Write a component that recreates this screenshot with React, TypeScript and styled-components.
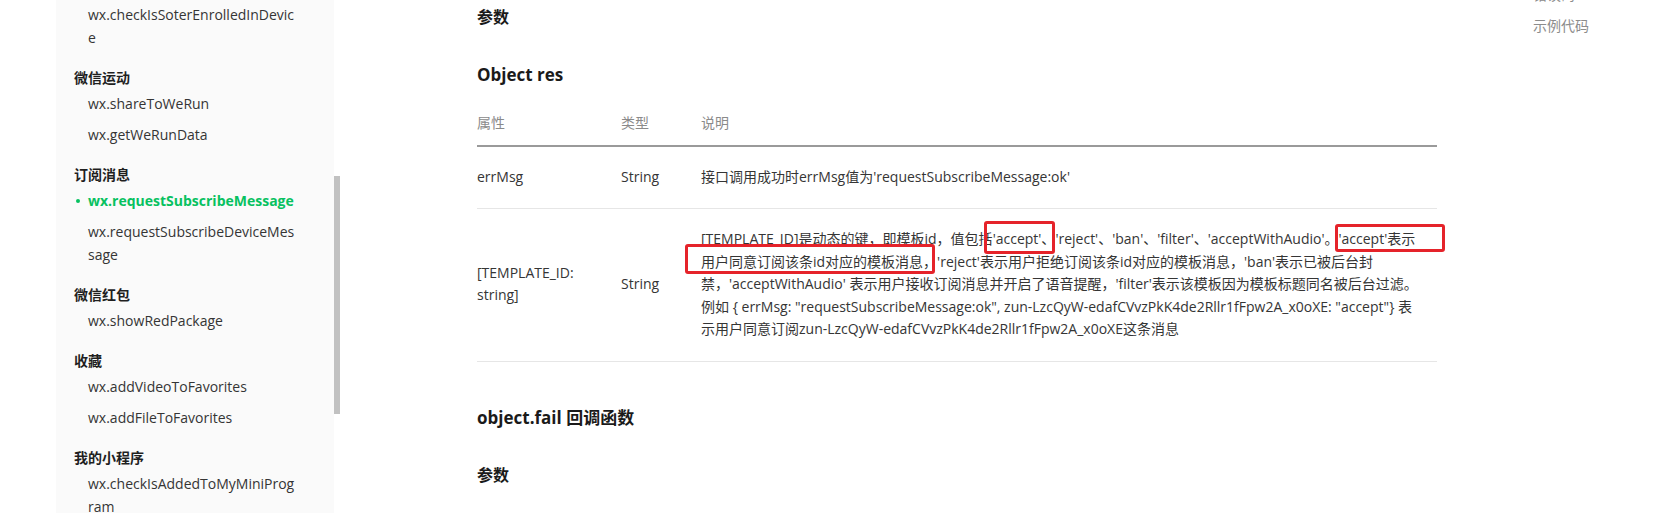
import React from "react";
import styled, { createGlobalStyle } from "styled-components";

type NavGroup = {
  title?: string;
  items: { label: string; active?: boolean }[];
};

type MarkProps = {
  $t: number;
  $r: number;
  $b: number;
  $l: number;
};

// \u200B marks where the long api names wrap in the original sidebar
const navGroups: NavGroup[] = [
  { items: [{ label: "wx.checkIsSoterEnrolledInDevic\u200Be" }] },
  {
    title: "微信运动",
    items: [{ label: "wx.shareToWeRun" }, { label: "wx.getWeRunData" }],
  },
  {
    title: "订阅消息",
    items: [
      { label: "wx.requestSubscribeMessage", active: true },
      { label: "wx.requestSubscribeDeviceMes\u200Bsage" },
    ],
  },
  { title: "微信红包", items: [{ label: "wx.showRedPackage" }] },
  {
    title: "收藏",
    items: [{ label: "wx.addVideoToFavorites" }, { label: "wx.addFileToFavorites" }],
  },
  { title: "我的小程序", items: [{ label: "wx.checkIsAddedToMyMiniProg\u200Bram" }] },
];

const GlobalStyle = createGlobalStyle`
  html, body {
    margin: 0;
    padding: 0;
    background: #ffffff;
    overflow: hidden;
  }
  body {
    font-family: "Open Sans", "Noto Sans CJK SC", sans-serif;
    font-size: 14px;
    color: #353535;
  }
`;

const Page = styled.div`
  display: flex;
  align-items: flex-start;
  height: 513px;
  overflow: hidden;
`;

const SideArea = styled.aside`
  display: flex;
  flex: none;
  margin-left: 56px;
  height: 513px;
`;

const SideNav = styled.nav`
  width: 278px;
  box-sizing: border-box;
  padding-left: 18px;
  background: #fafafa;
`;

const NavInner = styled.div`
  margin-top: -1px;
`;

const Group = styled.div<{ $first?: boolean }>`
  margin-top: ${(p) => (p.$first ? 0 : 14)}px;
`;

const GroupTitle = styled.div`
  font-weight: 700;
  line-height: 21px;
  color: #1f1f1f;
`;

const NavItem = styled.div<{ $active?: boolean }>`
  position: relative;
  width: 212px;
  padding: 4px 0 4px 14px;
  line-height: 23px;
  word-break: normal;
  color: ${(p) => (p.$active ? "#07c160" : "#353535")};
  font-weight: ${(p) => (p.$active ? 700 : 400)};

  &::before {
    content: "";
    display: ${(p) => (p.$active ? "block" : "none")};
    position: absolute;
    left: 2px;
    top: 14px;
    width: 4px;
    height: 4px;
    border-radius: 50%;
    background: #07c160;
  }
`;

const ScrollTrack = styled.div`
  width: 6px;
  background: #ffffff;
`;

const ScrollThumb = styled.div`
  margin-top: 176px;
  height: 238px;
  background: #c1c1c1;
`;

const Main = styled.main`
  flex: none;
  width: 960px;
  margin-left: 137px;
  padding-top: 5px;
`;

const SubTitle = styled.h4<{ $gap?: number }>`
  margin: ${(p) => p.$gap || 0}px 0 0;
  font-size: 16px;
  line-height: 24px;
  font-weight: 700;
  color: #1a1a1a;
`;

const Title = styled.h3<{ $gap: number }>`
  margin: ${(p) => p.$gap}px 0 0;
  font-size: 17px;
  line-height: 26px;
  font-weight: 700;
  color: #1a1a1a;
`;

const Table = styled.table`
  width: 100%;
  margin-top: 13px;
  border-collapse: collapse;
  table-layout: fixed;
`;

const HeadCell = styled.th<{ $w?: number }>`
  width: ${(p) => (p.$w ? `${p.$w}px` : "auto")};
  padding: 11px 0 10px;
  text-align: left;
  font-weight: 400;
  line-height: 22.5px;
  color: #8a8a8a;
  border-bottom: 2px solid #9a9a9a;
`;

const Cell = styled.td`
  padding: 19px 10px 20px 0;
  line-height: 22.5px;
  vertical-align: middle;
  border-bottom: 1px solid #e6e6e6;
  color: #353535;
`;

const DescLine = styled.span`
  display: block;
  white-space: nowrap;
`;

const Marked = styled.span<MarkProps>`
  position: relative;

  &::after {
    content: "";
    position: absolute;
    top: ${(p) => p.$t}px;
    right: ${(p) => p.$r}px;
    bottom: ${(p) => p.$b}px;
    left: ${(p) => p.$l}px;
    border: 3px solid #e5232a;
    border-radius: 3px;
    pointer-events: none;
  }
`;

const Outline = styled.div`
  flex: none;
  margin-left: 96px;
  margin-top: -21px;
`;

const OutlineItem = styled.div`
  line-height: 31px;
  color: #8c8c8c;
`;

const NavList: React.FC = () => (
  <SideArea>
    <SideNav>
      <NavInner>
        {navGroups.map((group, i) => (
          <Group key={i} $first={i === 0}>
            {group.title && <GroupTitle>{group.title}</GroupTitle>}
            {group.items.map((item) => (
              <NavItem key={item.label} $active={item.active}>
                {item.label}
              </NavItem>
            ))}
          </Group>
        ))}
      </NavInner>
    </SideNav>
    <ScrollTrack>
      <ScrollThumb />
    </ScrollTrack>
  </SideArea>
);

export default function App() {
  return (
    <>
      <GlobalStyle />
      <Page>
        <NavList />
        <Main>
          <SubTitle>参数</SubTitle>
          <Title $gap={33}>Object res</Title>
          <Table>
            <thead>
              <tr>
                <HeadCell $w={144}>属性</HeadCell>
                <HeadCell $w={80}>类型</HeadCell>
                <HeadCell>说明</HeadCell>
              </tr>
            </thead>
            <tbody>
              <tr>
                <Cell>errMsg</Cell>
                <Cell>String</Cell>
                <Cell>接口调用成功时errMsg值为'requestSubscribeMessage:ok'</Cell>
              </tr>
              <tr>
                <Cell>[TEMPLATE_ID: string]</Cell>
                <Cell>String</Cell>
                <Cell>
                  <DescLine>
                    [TEMPLATE_ID]是动态的键，即模板id，值包括
                    <Marked $t={-8} $r={0} $b={-6} $l={-9}>
                      'accept'、
                    </Marked>
                    'reject'、'ban'、'filter'、'acceptWithAudio'。
                    <Marked $t={-5} $r={-30} $b={-4} $l={-4}>
                      'accept'表示
                    </Marked>
                  </DescLine>
                  <DescLine>
                    <Marked $t={-8} $r={2} $b={-3} $l={-16}>
                      用户同意订阅该条id对应的模板消息，
                    </Marked>
                    'reject'表示用户拒绝订阅该条id对应的模板消息，'ban'表示已被后台封
                  </DescLine>
                  <DescLine>
                    禁，'acceptWithAudio' 表示用户接收订阅消息并开启了语音提醒，'filter'表示该模板因为模板标题同名被后台过滤。
                  </DescLine>
                  <DescLine>
                    例如 {"{"} errMsg: "requestSubscribeMessage:ok", zun-LzcQyW-edafCVvzPkK4de2Rllr1fFpw2A_x0oXE: "accept"{"}"} 表
                  </DescLine>
                  <DescLine>
                    示用户同意订阅zun-LzcQyW-edafCVvzPkK4de2Rllr1fFpw2A_x0oXE这条消息
                  </DescLine>
                </Cell>
              </tr>
            </tbody>
          </Table>
          <Title $gap={43}>object.fail 回调函数</Title>
          <SubTitle $gap={32}>参数</SubTitle>
        </Main>
        <Outline>
          <OutlineItem>错误码</OutlineItem>
          <OutlineItem>示例代码</OutlineItem>
        </Outline>
      </Page>
    </>
  );
}
